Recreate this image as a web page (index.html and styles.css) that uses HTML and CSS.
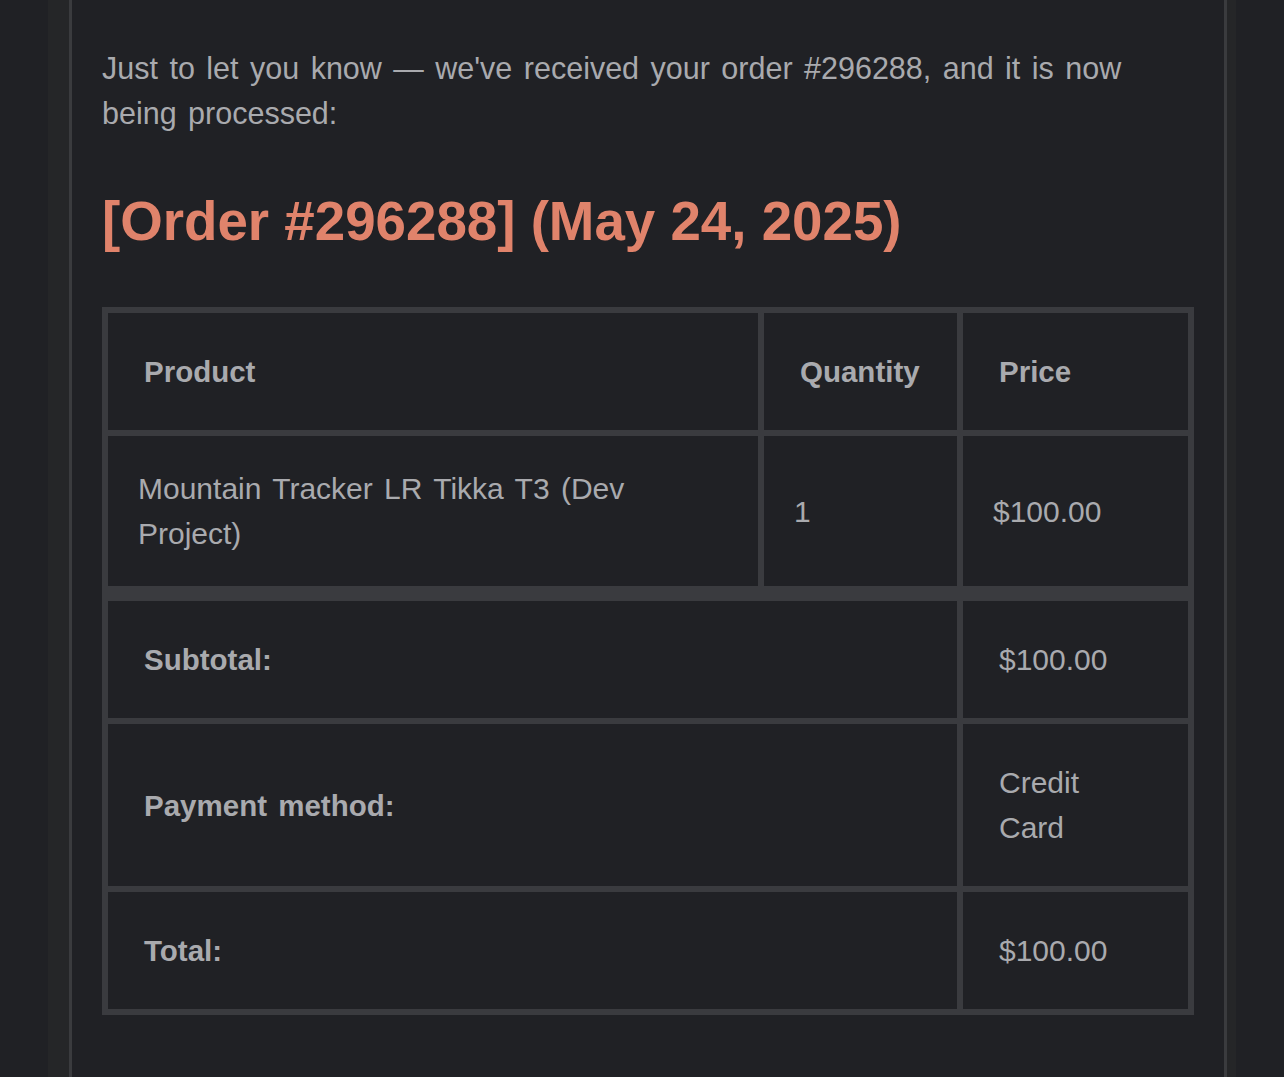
FILE: index.html
```html
<!DOCTYPE html>
<html lang="en">
<head>
<meta charset="utf-8">
<title>Order received</title>
<link rel="stylesheet" href="styles.css">
</head>
<body>
<div class="frame">
  <div class="sheet">
    <p class="intro">Just to let you know — we've received your order #296288, and it is now being processed:</p>
    <h2 class="order-title">[Order #296288] (May 24, 2025)</h2>
    <table class="order-table">
      <thead>
        <tr>
          <th class="col-product">Product</th>
          <th class="col-qty">Quantity</th>
          <th class="col-price">Price</th>
        </tr>
      </thead>
      <tbody>
        <tr>
          <td>Mountain Tracker LR Tikka T3 (Dev Project)</td>
          <td>1</td>
          <td>$100.00</td>
        </tr>
      </tbody>
      <tfoot>
        <tr class="first">
          <th colspan="2">Subtotal:</th>
          <td>$100.00</td>
        </tr>
        <tr>
          <th colspan="2">Payment method:</th>
          <td>Credit Card</td>
        </tr>
        <tr>
          <th colspan="2">Total:</th>
          <td>$100.00</td>
        </tr>
      </tfoot>
    </table>
  </div>
</div>
</body>
</html>
```

FILE: styles.css
```css
html, body {
  margin: 0;
  padding: 0;
  background: #202125;
}

body {
  font-family: "Liberation Sans", Arial, Helvetica, sans-serif;
  color: #a9aaae;
  word-spacing: 3px;
}

.frame {
  margin-left: 48px;
  width: 1188px;
  box-sizing: border-box;
  padding: 0 9px 0 21px;
  background: #252628;
  min-height: 1077px;
  display: flex;
}

.sheet {
  flex: 1;
  background: #202125;
  border-left: 3px solid #3a3b3e;
  border-right: 3px solid #3a3b3e;
  padding: 46px 30px 0;
}

.intro {
  margin: 0;
  font-size: 30.5px;
  line-height: 45px;
}

.order-title {
  margin: 50px 0 51px;
  font-size: 54.7px;
  line-height: 70px;
  font-weight: bold;
  color: #e0836b;
  word-spacing: 0;
}

.order-table {
  width: 1092px;
  table-layout: fixed;
  border-collapse: separate;
  border-spacing: 0;
  border: 3px solid #3a3b3f;
  font-size: 30px;
  line-height: 45px;
}

.order-table th,
.order-table td {
  border: 3px solid #3a3b3f;
  text-align: left;
  vertical-align: middle;
  box-sizing: border-box;
}

.order-table th {
  padding: 36px;
  font-size: 29.5px;
  font-weight: bold;
}

.order-table tbody td {
  padding: 30px;
}

.order-table tfoot td {
  padding: 36px;
}

.order-table tfoot tr.first th,
.order-table tfoot tr.first td {
  border-top-width: 12px;
}

.col-product { width: 656px; }
.col-qty { width: 199px; }
```
